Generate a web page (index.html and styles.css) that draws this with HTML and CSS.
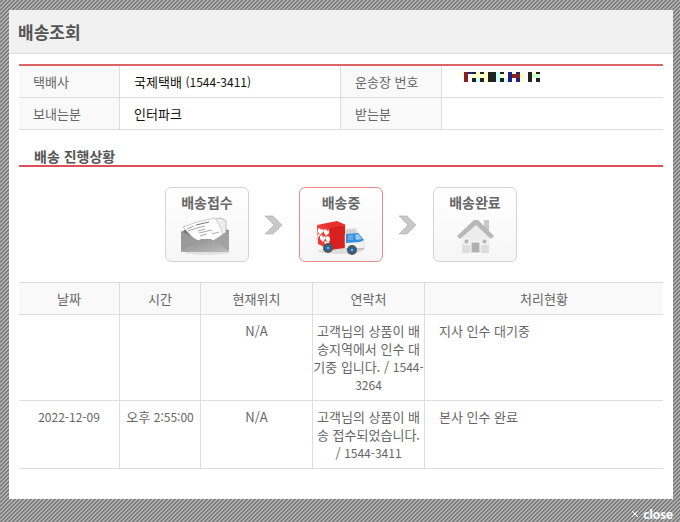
FILE: index.html
```html
<!DOCTYPE html>
<html lang="ko">
<head>
<meta charset="UTF-8">
<meta name="viewport" content="width=device-width, initial-scale=1">
<title>배송조회</title>
<link rel="stylesheet" href="styles.css">
</head>
<body>
<div class="popup">
  <header class="popup-head">
    <h1>배송조회</h1>
  </header>
  <div class="popup-body">
    <table class="info">
      <colgroup><col class="w-label"><col class="w-value"><col class="w-label"><col></colgroup>
      <tr>
        <th scope="row">택배사</th>
        <td>국제택배 <span class="num">(1544-3411)</span></td>
        <th scope="row">운송장 번호</th>
        <td>
          <svg class="masked" width="84" height="10" viewBox="0 0 84 10" shape-rendering="crispEdges" aria-hidden="true">
            <path fill="#ffffcc" d="M0 0h4v2H0zM16 0h4v2h-4zM12 2h16v4H12zM24 0h4v10h-4zM40 2h4v4h-4zM52 0h4v2h-4zM60 0h4v10h-4zM72 0h4v2h-4z"/>
            <path fill="#ccffff" d="M12 6h8v4h-8zM36 0h4v10h-4zM44 6h4v4h-4z"/>
            <path fill="#ccffcc" d="M72 2h8v4h-8z"/>
            <path fill="#222" d="M12 0h4v2h-4zM20 0h4v2h-4zM12 6h4v4h-4zM20 6h4v4h-4zM28 0h8v10h-8zM40 0h4v2h-4zM40 6h4v4h-4zM68 0h4v10h-4zM76 0h4v2h-4zM76 6h4v4h-4z"/>
            <path fill="#222288" d="M8 0h4v2H8zM48 0h4v10h-4zM56 0h4v2h-4zM56 6h4v4h-4z"/>
            <path fill="#882222" d="M4 0h4v10H4zM52 2h8v4h-8z"/>
          </svg>
        </td>
      </tr>
      <tr>
        <th scope="row">보내는분</th>
        <td>인터파크</td>
        <th scope="row">받는분</th>
        <td></td>
      </tr>
    </table>

    <h2>배송 진행상황</h2>
    <ol class="steps">
      <li class="step">
        <span>배송접수</span>
        <svg width="54" height="42" viewBox="0 0 54 42" aria-hidden="true">
          <defs>
            <linearGradient id="env" x1="0" y1="0" x2="1" y2="1"><stop offset="0" stop-color="#8c8c8c"/><stop offset="1" stop-color="#bcbcbc"/></linearGradient>
          </defs>
          <ellipse cx="27" cy="37" rx="23" ry="3" fill="#e2e2e2"/>
          <path fill="#777" d="M2 17L9 11h33l7 5v8H2z"/>
          <path fill="#eee" stroke="#bbb" d="M14 8l27-5 5 3v14l-8 6H20z"/>
          <path fill="#fff" stroke="#ccc" d="M3 12l14-5 18-4 6 10 2 9-6 5H17z"/>
          <path fill="none" stroke="#777" d="M16 10l13-3"/>
          <path fill="none" stroke="#aaa" d="M7 14l7-3M8 16l9-3M17 13l8-2M18 16l7-2M19 18l13-3M20 21l7-2M32 19l7-2"/>
          <path fill="#999" d="M1 16l20 11L1 36z"/>
          <path fill="#a2a2a2" d="M49 15L31 27l18 9z"/>
          <path fill="url(#env)" d="M1 36l20-12h10l18 12v1H1z"/>
        </svg>
      </li>
      <li class="next"><svg width="18" height="20" viewBox="0 0 18 20" aria-hidden="true"><path fill="#c8c8c8" stroke="#aaa" stroke-width=".6" d="M0 1h8l9 9-9 9H0l9-9z"/></svg></li>
      <li class="step on">
        <span>배송중</span>
        <svg width="50" height="42" viewBox="0 0 50 42" aria-hidden="true">
          <ellipse cx="24" cy="36" rx="22" ry="3" fill="#ddd"/>
          <path fill="#ddd" d="M28 14l12-1 3 7-14 2z"/>
          <path fill="none" stroke="#bbb" d="M31 15l1 4M34 15l1 4M37 15l1 4"/>
          <path fill="#ef3b35" d="M1 10l14 2v23L2 29z"/>
          <path fill="#d8201f" d="M14 12l15-2v23l-15 2z"/>
          <path fill="#e8302c" d="M1 10l20-4 9 4-15 3z"/>
          <path fill="#fff" d="M2 14l2-1 1 2 2-1 1 2-4 4-2-3zM8 15l2-1 1 2 2-1v3l-3 3-2-3zM4 21l2-1 1 2 2-1 1 2-3 4-3-3zM10 22l2-1 2 2v3l-2 1-2-2zM8 27l2-1 1 1 2-1v2l-3 3zM2 19l2 1-2 3z"/>
          <path fill="#f3f3f3" stroke="#d2d2d2" stroke-width=".6" d="M29 19l13-1 6 7v9H29z"/>
          <path fill="#358ee0" d="M30 19l12-1 6 7-4 2-14 1z"/>
          <path fill="#9bcaf2" d="M39 20l3-1 4 5-6 1z"/>
          <path fill="#64aae8" d="M32 20h5v5h-5z"/>
          <path fill="#c4c4c4" d="M30 33h18v2H30z"/>
          <circle cx="12" cy="33" r="5" fill="#555"/><circle cx="12" cy="33" r="3" fill="#2367ad"/><circle cx="12" cy="33" r="1" fill="#9bcaf2"/>
          <circle cx="36" cy="35" r="5" fill="#555"/><circle cx="36" cy="35" r="3" fill="#2367ad"/><circle cx="36" cy="35" r="1" fill="#9bcaf2"/>
        </svg>
      </li>
      <li class="next"><svg width="18" height="20" viewBox="0 0 18 20" aria-hidden="true"><path fill="#c8c8c8" stroke="#aaa" stroke-width=".6" d="M0 1h8l9 9-9 9H0l9-9z"/></svg></li>
      <li class="step">
        <span>배송완료</span>
        <svg width="50" height="42" viewBox="0 0 50 42" aria-hidden="true">
          <path fill="#c8c8c8" d="M34 5h5v14l-5-4z"/>
          <path fill="#ececec" d="M12 21L26 9l13 12v17H12z"/>
          <path fill="#dedede" d="M12 30h27v8H12z"/>
          <path fill="#b8b8b8" d="M7 21L24 5h4l16 16-3 3L26 10 10 24z"/>
          <path fill="#b0b0b0" stroke="#fff" d="M21 27h9v11h-9z"/>
          <path fill="#b8b8b8" stroke="#fff" d="M14 24h5v5h-5zM32 24h5v5h-5z"/>
        </svg>
      </li>
    </ol>

    <table class="history">
      <colgroup><col class="w-date"><col class="w-time"><col class="w-place"><col class="w-place"><col></colgroup>
      <thead>
        <tr><th>날짜</th><th>시간</th><th>현재위치</th><th>연락처</th><th>처리현황</th></tr>
      </thead>
      <tbody>
        <tr>
          <td></td>
          <td></td>
          <td>N/A</td>
          <td>고객님의 상품이 배<br>송지역에서 인수 대<br>기중 입니다. / <span class="num">1544-<br>3264</span></td>
          <td class="state">지사 인수 대기중</td>
        </tr>
        <tr>
          <td class="num">2022-12-09</td>
          <td>오후 <span class="num">2:55:00</span></td>
          <td>N/A</td>
          <td>고객님의 상품이 배<br>송 접수되었습니다.<br>/ <span class="num">1544-3411</span></td>
          <td class="state">본사 인수 완료</td>
        </tr>
      </tbody>
    </table>
  </div>
</div>
<div class="popup-foot">
  <button type="button" class="close"><svg width="8" height="8" viewBox="0 0 8 8" aria-hidden="true"><path stroke="#fff" d="M1 1l6 6M7 1L1 7"/></svg>close</button>
</div>
</body>
</html>
```

FILE: styles.css
```css
* {
  box-sizing: border-box;
}
body {
  margin: 0;
  padding: 10px 7px 0 9px;
  font: 13px/18px "Noto Sans CJK KR", sans-serif;
  color: #666;
  background: #8c8c8c linear-gradient(135deg, #b4b4b4 12%, #7c7c7c 16%, #7c7c7c 40%, #b4b4b4 46%, #b4b4b4 62%, #7c7c7c 66%, #7c7c7c 90%, #b4b4b4 96%) 0 0 / 4px 4px;
}
.popup {
  background: #fff;
}
.popup-head {
  height: 44px;
  padding: 0 9px;
  background: #f1f1f1;
  border-bottom: 1px solid #ddd;
}
h1 {
  margin: 0;
  font-size: 17px;
  line-height: 44px;
  color: #555;
}
.popup-body {
  padding: 10px 10px 30px;
}

table {
  width: 100%;
  border-collapse: separate;
  border-spacing: 0;
  table-layout: fixed;
}
th {
  background: #f9f9f9;
  font-weight: normal;
}
th, td {
  border-right: 1px solid #ddd;
  border-bottom: 1px solid #ddd;
}
th:last-child, td:last-child {
  border-right: 0;
}
.num {
  font-size: 12px;
}

.info {
  border-top: 2px solid #dc6464;
}
.info th, .info td {
  height: 32px;
  padding: 0 14px;
  text-align: left;
}
.info td {
  color: #111;
}
.w-label { width: 101px; }
.w-value { width: 221px; }
.masked {
  display: block;
  margin: 0 4px 10px;
}

h2 {
  margin: 17px 0 20px;
  padding: 0 15px;
  border-bottom: 2px solid #dc5058;
  font-size: 14px;
  line-height: 18px;
  color: #555;
}

.steps {
  display: flex;
  justify-content: center;
  align-items: center;
  margin: 0 0 20px;
  padding: 0;
  list-style: none;
}
.step {
  display: flex;
  flex-direction: column;
  align-items: center;
  gap: 4px;
  width: 84px;
  height: 75px;
  padding-top: 5px;
  border: 1px solid #d4d4d4;
  border-radius: 6px;
  background: linear-gradient(#fff, #f6f6f6);
  font-size: 14px;
  font-weight: bold;
}
.step.on {
  border-color: #e68a8a;
}
.next {
  display: flex;
  justify-content: center;
  width: 50px;
}

.history {
  border-top: 1px solid #ddd;
}
.history th {
  height: 32px;
  padding: 0;
}
.history td {
  padding: 7px 0 6px;
  text-align: center;
  vertical-align: top;
  white-space: nowrap;
}
.history .state {
  padding-left: 14px;
  text-align: left;
}
.w-date { width: 101px; }
.w-time { width: 81px; }
.w-place { width: 112px; }

.popup-foot {
  display: flex;
  justify-content: flex-end;
  padding-top: 7px;
}
.close {
  display: flex;
  align-items: center;
  gap: 4px;
  padding: 0;
  border: 0;
  background: none;
  font: 900 13px/16px Lato, sans-serif;
  color: #fff;
  cursor: pointer;
}
```
